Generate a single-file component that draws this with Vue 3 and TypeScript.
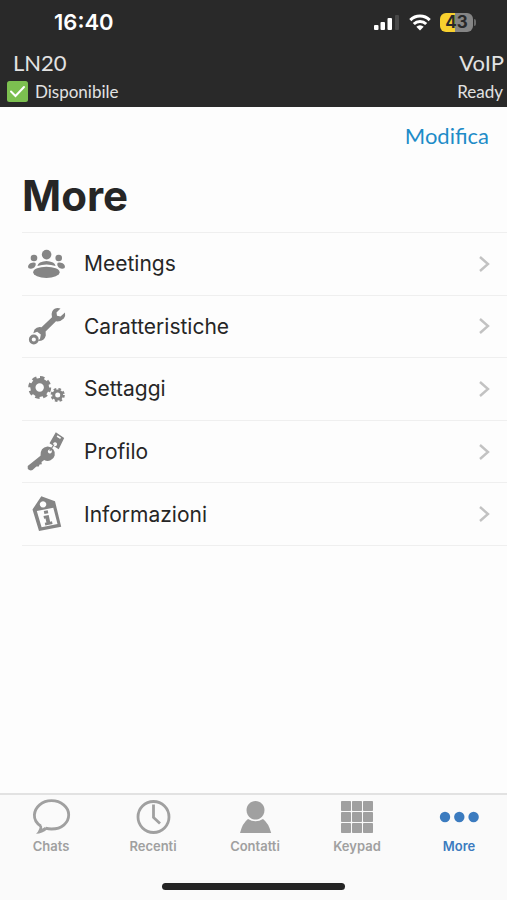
<script setup lang="ts">
import { ref } from 'vue'

interface Item {
  id: string
  label: string
}

const items: Item[] = [
  { id: 'meetings', label: 'Meetings' },
  { id: 'features', label: 'Caratteristiche' },
  { id: 'settings', label: 'Settaggi' },
  { id: 'profile', label: 'Profilo' },
  { id: 'info', label: 'Informazioni' },
]

const tabs: Item[] = [
  { id: 'chats', label: 'Chats' },
  { id: 'recent', label: 'Recenti' },
  { id: 'contacts', label: 'Contatti' },
  { id: 'keypad', label: 'Keypad' },
  { id: 'more', label: 'More' },
]

const activeTab = ref('more')
const keys = [4, 15, 26]
</script>

<template>
  <div class="screen">
    <header class="top">
      <div class="status">
        <span class="clock">16:40</span>
        <div class="indicators">
          <svg class="signal" width="25" height="16" viewBox="0 0 25 16" aria-hidden="true">
            <rect x="0" y="11" width="4.500" height="5" rx="1" fill="#fff" />
            <rect x="6.500" y="8" width="4.500" height="8" rx="1" fill="#fff" />
            <rect x="13.500" y="4" width="4.500" height="12" rx="1" fill="#fff" />
            <rect x="21" y="1" width="4" height="15" rx="1" fill="#484848" />
          </svg>
          <svg class="wifi" width="22" height="17" viewBox="0 0 22 17" aria-hidden="true">
            <g fill="none" stroke="#fff" stroke-width="3">
              <path d="M1.300 6.100a13.700 13.700 0 0 1 19.400 0" />
              <path d="M4.800 10a8.700 8.700 0 0 1 12.400 0" />
            </g>
            <path d="M7.300 12.800a5.200 5.200 0 0 1 7.400 0L11 16.500z" fill="#fff" />
          </svg>
          <div class="battery"><span class="level">43</span></div>
        </div>
      </div>
      <div class="account">
        <span>LN20</span>
        <span>VoIP</span>
      </div>
      <div class="presence">
        <span class="available">
          <svg width="21" height="21" viewBox="0 0 21 21" aria-hidden="true">
            <rect width="21" height="21" rx="2.500" fill="#7cc050" />
            <path d="M4 10.500l4.500 4.500L17 6" fill="none" stroke="#fff" stroke-width="2" stroke-linecap="round" />
          </svg>
          Disponibile
        </span>
        <span>Ready</span>
      </div>
    </header>

    <main class="content">
      <div class="actions"><button type="button" class="edit">Modifica</button></div>
      <h1>More</h1>
      <ul class="list">
        <li v-for="item in items" :key="item.id">
          <a href="#" class="row" @click.prevent>
            <svg class="row-icon" width="40" height="40" viewBox="0 0 40 40" fill="#858585" aria-hidden="true">
              <g v-if="item.id === 'meetings'">
                <circle cx="20.600" cy="10.600" r="4.800" />
                <circle cx="8" cy="14" r="3.300" />
                <circle cx="32.700" cy="14" r="3.300" />
                <ellipse cx="20.400" cy="28.300" rx="13.200" ry="5.600" />
                <path d="M11.400 22q.4-2.600 2.600-3.600 6.400-3 13 0 2.200 1 2.600 3.600-9-3.200-18.200 0z" />
                <path d="M2 23q.2-3.600 4-4.300 3.600-.6 3.800 1.200Q9.600 24 5 24.800 2.200 25 2 23z" />
                <path d="M39 23q-.2-3.600-4-4.300-3.600-.6-3.800 1.200Q31.400 24 36 24.800 38.800 25 39 23z" />
              </g>
              <g v-else-if="item.id === 'features'">
                <path d="M34.500 2.500Q29 1 26.300 5.200 25 8 26 11.200L15.500 21.200Q11.200 20.200 8.500 23.500L7.300 27.300 11.200 25.800 14.800 28.500 14 32.800 11.800 35Q18.500 35.200 19.800 29.500L19.600 25.500 30 15.300Q34.500 16 37.800 12.600 39.800 9.500 39 6.500L34.500 10.500 31 9.800 30.500 6.600z" />
                <circle cx="7.800" cy="33.500" r="3.500" fill="none" stroke="#858585" stroke-width="2.800" />
              </g>
              <g v-else-if="item.id === 'settings'" fill="none" stroke="#858585">
                <circle cx="13.700" cy="18.500" r="6.800" stroke-width="5.200" />
                <circle cx="13.700" cy="18.500" r="10" stroke-width="3" stroke-dasharray="4.400 3.454" />
                <circle cx="31.700" cy="26" r="4" stroke-width="3" />
                <circle cx="31.700" cy="26" r="6" stroke-width="2.200" stroke-dasharray="2.600 2.112" />
              </g>
              <g v-else-if="item.id === 'profile'">
                <path fill-rule="evenodd" d="M29.800.3 38.200 6 32.700 17.200 23.500 11.200zM29 10.200a2 2 0 1 0 .1 0zM31.500 3.200l-.8 1.500 3.500 2.300.8-1.500z" />
                <path d="M28 12.500l-4.200 6.500" stroke="#858585" stroke-width="1.200" />
                <path fill-rule="evenodd" d="M21.500 14.500a7.200 7.200 0 1 1-3.300 13.500L15.500 30l.3 2.200-2.200.2-.8 2.200-2.400-.2L6.500 38Q4 39.200 1.800 37L1.700 34 14.500 23.800Q14 15.600 21.500 14.500zM23.800 17.500a2 2 0 1 0 .1 0z" />
              </g>
              <g v-else>
                <path fill-rule="evenodd" d="M15.300 2.300 29 7.200 35.200 32.700 13 37 6.500 15.600zM10.800 17 15.600 33.200 31.500 30 27.300 13.800zM17 7.200a3.200 3.200 0 1 0 .1 0z" />
                <g transform="rotate(-12 21 24)">
                  <rect x="19.300" y="16.600" width="4" height="3" />
                  <path d="M18 21.300h5.300v6.900h1.900V31h-7.400v-2.800h1.700v-4.100H18z" />
                </g>
              </g>
            </svg>
            <span class="row-label">{{ item.label }}</span>
            <svg class="chevron" width="12" height="18" viewBox="0 0 12 18" aria-hidden="true">
              <path d="M2 2l8 7-8 7" fill="none" stroke="#c2c2c2" stroke-width="2.400" />
            </svg>
          </a>
        </li>
      </ul>
    </main>

    <footer class="bottom">
      <nav class="tabs">
        <button
          v-for="tab in tabs"
          :key="tab.id"
          type="button"
          class="tab"
          :class="{ active: tab.id === activeTab }"
          @click="activeTab = tab.id"
        >
          <svg width="40" height="40" viewBox="0 0 40 40" fill="currentColor" aria-hidden="true">
            <g v-if="tab.id === 'chats'">
              <path
                d="M9.700 29C5 26 3.200 22 3.400 17.800 4 10 11 3.700 20.500 3.700S37.700 10 37.700 17.800 31 32 20.500 32q-3.200 0-6-.8"
                fill="none"
                stroke="currentColor"
                stroke-width="2.800"
              />
              <path d="M8.500 27.500Q9.500 32.500 5 36.800 11.500 36.600 16 32.500L14 30 11.200 31.800 11 28.800z" />
            </g>
            <g v-else-if="tab.id === 'recent'" fill="none" stroke="currentColor" stroke-width="2.800">
              <circle cx="20.500" cy="20" r="15.500" />
              <path d="M20.500 7.500V20.500l6.500 6" />
            </g>
            <g v-else-if="tab.id === 'contacts'">
              <path d="M20.500 4c5 0 9 4 9 9 0 4-2 6.500-4 8-3 2-7 2-10 0-2-1.500-4-4-4-8 0-5 4-9 9-9z" />
              <path d="M13 22q7.500 4.500 15 0 5.500 4 8.200 14H5Q7.500 26 13 22z" />
            </g>
            <g v-else-if="tab.id === 'keypad'">
              <template v-for="y in keys" :key="y">
                <rect v-for="x in keys" :key="x" :x="x" :y="y" width="10" height="10" rx="0.800" />
              </template>
            </g>
            <g v-else>
              <circle cx="6" cy="20" r="5.200" />
              <circle cx="20.300" cy="20" r="5.200" />
              <circle cx="34.600" cy="20" r="5.200" />
            </g>
          </svg>
          <span>{{ tab.label }}</span>
        </button>
      </nav>
      <div class="home"></div>
    </footer>
  </div>
</template>

<style>
body {
  margin: 0;
}
</style>

<style scoped>
.screen {
  display: flex;
  flex-direction: column;
  min-height: 100vh;
  overflow: hidden;
  background: #fdfdfd;
  color: #262626;
  font-family: Inter, 'Liberation Sans', sans-serif;
}

.top {
  background: #292929;
  color: #e2e2e2;
  font-family: Lato, 'Liberation Sans', sans-serif;
  padding-bottom: 4px;
}

.status {
  display: flex;
  align-items: center;
  justify-content: space-between;
  height: 44px;
  padding: 0 34px 0 54px;
  color: #fff;
  font-family: Inter, 'Liberation Sans', sans-serif;
}

.clock {
  font-size: 22px;
  font-weight: 600;
}

.indicators {
  display: flex;
  align-items: center;
}

.wifi {
  margin: 0 9px 0 10px;
}

.battery {
  position: relative;
  box-sizing: border-box;
  width: 33px;
  height: 19px;
  border-radius: 6px;
  background: linear-gradient(90deg, #f8d02e 45%, #858585 45%);
  color: #292929;
  font-size: 17px;
  font-weight: 700;
  line-height: 19px;
  text-align: center;
}

.battery::after {
  content: '';
  position: absolute;
  top: 6px;
  right: -3px;
  width: 2px;
  height: 7px;
  border-radius: 0 2px 2px 0;
  background: #6a6a6a;
}

.account,
.presence {
  display: flex;
  align-items: center;
  justify-content: space-between;
}

.account {
  height: 36px;
  padding: 0 3px 0 13px;
  box-sizing: border-box;
  font-size: 22px;
}

.presence {
  height: 23px;
  padding: 0 4px 0 7px;
  font-size: 17px;
}

.available {
  display: flex;
  align-items: center;
  gap: 7px;
}

.content {
  flex: 1;
}

.actions {
  display: flex;
  justify-content: flex-end;
  padding: 12px 18px 0;
}

.edit {
  padding: 0;
  border: 0;
  background: none;
  color: #1e8cc8;
  font-family: Lato, 'Liberation Sans', sans-serif;
  font-size: 22px;
  line-height: 34px;
}

h1 {
  margin: 0;
  padding: 17px 22px 10px;
  font-size: 42px;
  font-weight: 700;
  line-height: 52px;
}

.list {
  display: grid;
  grid-auto-rows: 1fr;
  min-height: 313px;
  margin: 0 0 0 22px;
  padding: 0;
  border-top: 1px solid #efefef;
  list-style: none;
}

.list li {
  display: flex;
  border-bottom: 1px solid #efefef;
}

.row {
  display: flex;
  flex: 1;
  align-items: center;
  padding: 0 17px 0 4px;
  color: inherit;
  text-decoration: none;
}

.row-label {
  flex: 1;
  margin-left: 18px;
  font-size: 21px;
}

.bottom {
  border-top: 2px solid #e2e2e2;
  background: #fafafa;
}

.tabs {
  display: grid;
  grid-template-columns: repeat(5, 1fr);
  margin-right: -3px;
}

.tab {
  display: flex;
  flex-direction: column;
  align-items: center;
  gap: 1px;
  padding: 2px 0 0;
  border: 0;
  background: none;
  color: #a0a0a0;
  font-family: inherit;
  font-size: 13px;
  font-weight: 600;
  line-height: 16px;
}

.tab.active {
  color: #3b7bbf;
}

.home {
  width: 36%;
  height: 7px;
  margin: 29px auto 10px;
  border-radius: 4px;
  background: #242424;
}
</style>
